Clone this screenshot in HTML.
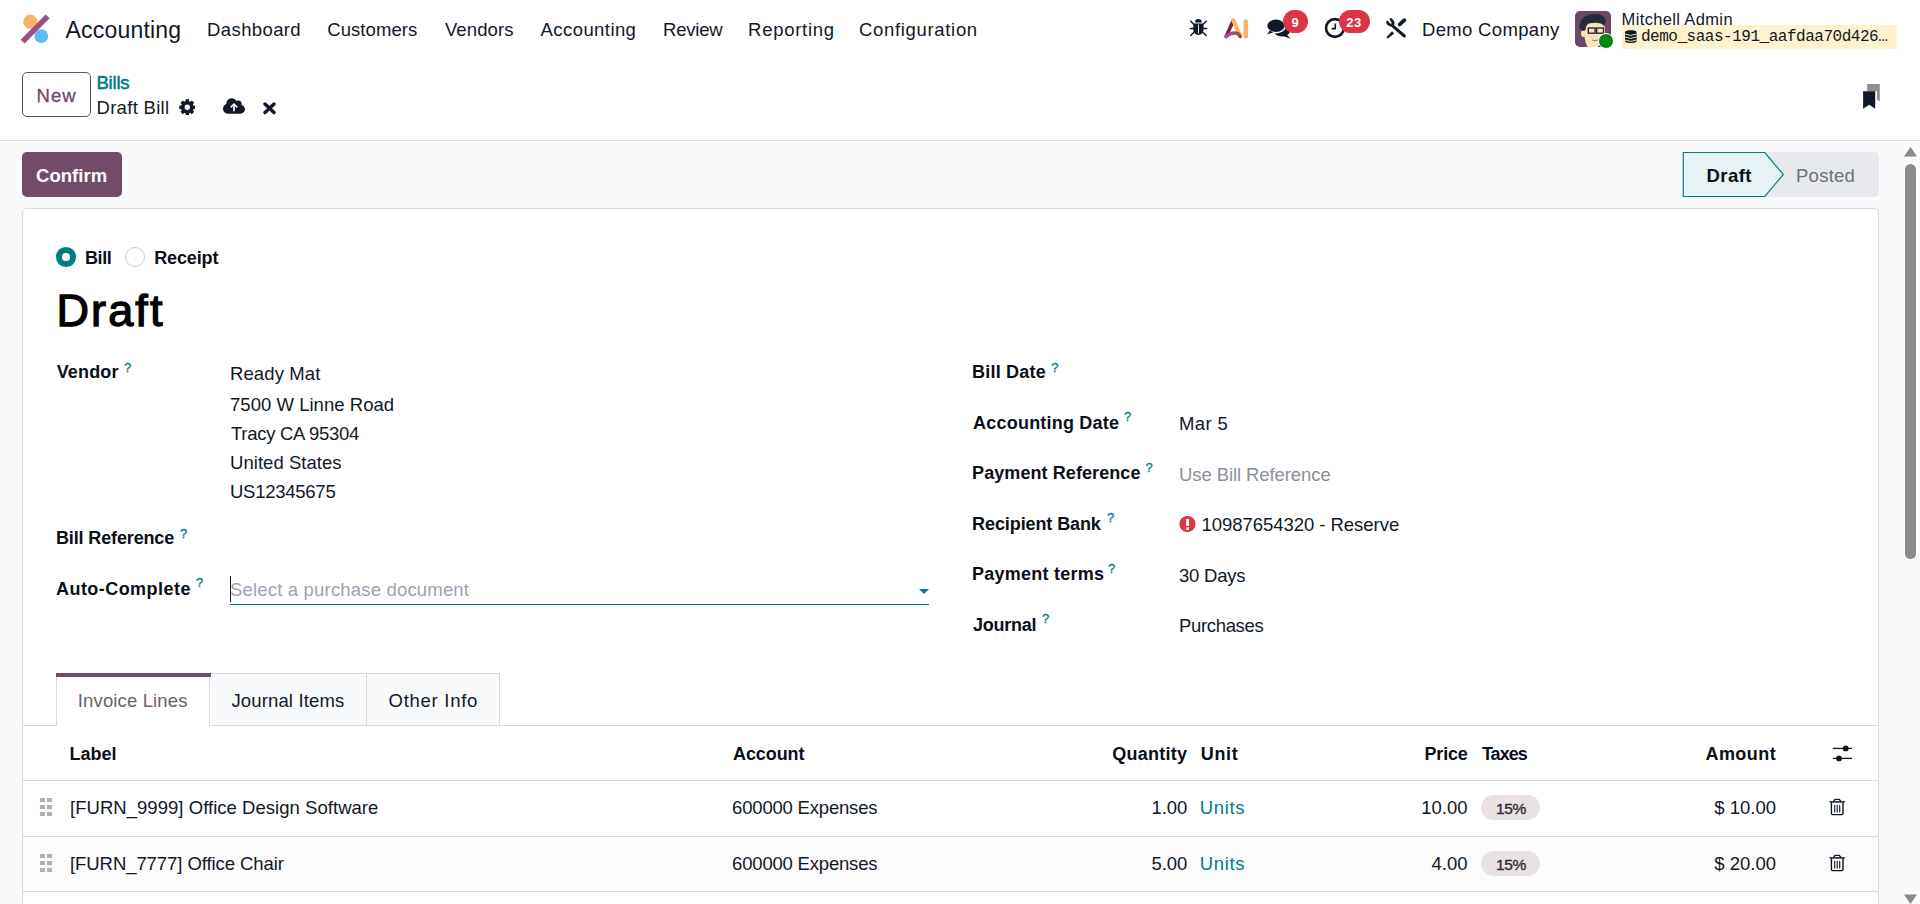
<!DOCTYPE html>
<html><head><meta charset="utf-8"><style>
html,body{margin:0;padding:0;width:1920px;height:904px;overflow:hidden;background:#fff;}
body{position:relative;font-family:"Liberation Sans",sans-serif;}
.t{position:absolute;white-space:nowrap;}
.a{position:absolute;}
</style></head><body>
<!-- content background -->
<div class="a" style="left:0;top:140px;width:1920px;height:1px;background:#d8dadd"></div>
<div class="a" style="left:0;top:141px;width:1920px;height:763px;background:#f9fafb"></div>
<!-- logo -->
<svg class="a" style="left:15px;top:10px" width="40" height="40" viewBox="15 10 40 40">
  <circle cx="30.3" cy="21.7" r="7.1" fill="#fbb36c"/>
  <circle cx="41.3" cy="36.1" r="6.9" fill="#5ebcf9"/>
  <line x1="22.6" y1="41.6" x2="47.6" y2="16.4" stroke="#985184" stroke-width="5.6" stroke-linecap="butt" stroke-linejoin="round"/>
</svg>
<!-- bug icon -->
<svg class="a" style="left:1188px;top:17px" width="21" height="21" viewBox="0 0 21 21" fill="#111827">
  <path d="M7 5.5 A3.4 3.4 0 0 1 13.8 5.5 Z"/>
  <path d="M5.3 6.6 H15.5 V13 A5.1 5.1 0 0 1 5.3 13 Z"/>
  <rect x="10.1" y="7.5" width="0.9" height="9" fill="#fff"/>
  <g stroke="#111827" stroke-width="1.5" stroke-linecap="round">
    <line x1="2.2" y1="11.6" x2="5.4" y2="11.6"/><line x1="15.4" y1="11.6" x2="18.7" y2="11.6"/>
    <line x1="2.7" y1="4.2" x2="5.8" y2="7.3"/><line x1="18.2" y1="4.2" x2="15.1" y2="7.3"/>
    <line x1="2.7" y1="18.5" x2="5.8" y2="15.5"/><line x1="18.2" y1="18.5" x2="15.1" y2="15.5"/>
  </g>
</svg>
<!-- AI icon -->
<svg class="a" style="left:1223px;top:17px" width="28" height="23" viewBox="0 0 28 23">
  <path d="M3.2 19.6 L10.3 3.6" stroke="#7a2540" stroke-width="3.6" stroke-linecap="round"/>
  <path d="M10.5 3.5 L17 19" stroke="#fbb36c" stroke-width="4.2" stroke-linecap="round"/>
  <path d="M3 19.5 Q9 14.5 14.5 16.5" stroke="#9b5087" stroke-width="3.4" fill="none" stroke-linecap="round"/>
  <path d="M14.2 16.4 Q16.2 17.2 17.2 19.6" stroke="#a24e2a" stroke-width="3.4" fill="none" stroke-linecap="round"/>
  <line x1="22.8" y1="4.5" x2="22.8" y2="19.3" stroke="#fbb36c" stroke-width="4.6" stroke-linecap="round"/>
</svg>
<!-- chat icon -->
<svg class="a" style="left:1265px;top:17px" width="28" height="23" viewBox="0 0 28 23" fill="#111827">
  <ellipse cx="16.8" cy="13.6" rx="8.3" ry="5.9"/>
  <path d="M21 17 L25.6 21.8 L18 19 Z"/>
  <ellipse cx="11" cy="8.8" rx="9.4" ry="6.9" stroke="#fff" stroke-width="1.4"/>
  <path d="M4.6 13.5 L2.2 17.6 L8.5 15.2 Z"/>
</svg>
<div class="a" style="left:1283px;top:10px;width:24.5px;height:23px;border-radius:12px;background:#dc3545"></div>
<!-- clock icon -->
<svg class="a" style="left:1323px;top:15px" width="26" height="26" viewBox="0 0 26 26">
  <circle cx="11.9" cy="13" r="8.9" fill="none" stroke="#111827" stroke-width="2.6"/>
  <path d="M12.3 8.5 V13.6 H8.6" fill="none" stroke="#111827" stroke-width="1.6"/>
</svg>
<div class="a" style="left:1338.5px;top:10px;width:31px;height:23px;border-radius:12px;background:#dc3545"></div>
<!-- tools icon -->
<svg class="a" style="left:1383px;top:15px" width="28" height="26" viewBox="0 0 28 26">
  <path d="M9.6 10.9 L21.4 21" stroke="#111827" stroke-width="3" stroke-linecap="round"/>
  <path d="M4.4 7.2 Q6.4 11.2 9.8 9.8 Q11 7 8 4.4" stroke="#111827" stroke-width="2.7" fill="none" stroke-linecap="round"/>
  <path d="M16.7 9.4 L21.4 5.2" stroke="#111827" stroke-width="3.8" stroke-linecap="round"/>
  <path d="M9 16.2 L11.2 18.6 L5.6 22.9 L3.6 23.4 L4.2 21.5 Z" fill="#111827"/>
</svg>
<!-- avatar -->
<svg class="a" style="left:1575px;top:11px" width="36" height="36" viewBox="0 0 36 36">
  <defs><clipPath id="av"><rect x="0" y="0" width="36" height="36" rx="5"/></clipPath></defs>
  <g clip-path="url(#av)">
  <rect x="0" y="0" width="36" height="36" fill="#6c4766"/>
  <path d="M9 18 C9 12 13 9 20 9 C27 9 30 13 30 19 C30 27 27 33 21 37 L13 37 C10 32 9 25 9 18 Z" fill="#fbe3b9"/>
  <ellipse cx="8.6" cy="22.5" rx="2.6" ry="3.4" fill="#fbe3b9"/>
  <path d="M4.5 17 C4 9 9 4 17 3.2 C25 2.5 31 5 30.5 11 L29 15 C26 11 20 11.5 14 12.5 C12 13 11 15 10.5 19 L8 20 Z" fill="#272b38"/>
  <rect x="13.3" y="17" width="6.8" height="5.2" fill="none" stroke="#272b38" stroke-width="1.4"/>
  <rect x="21.7" y="17" width="6.8" height="5.2" fill="none" stroke="#272b38" stroke-width="1.4"/>
  <line x1="20" y1="18.5" x2="21.8" y2="18.5" stroke="#272b38" stroke-width="1.2"/>
  <path d="M17 29 Q20 30.5 23 29" stroke="#a0665a" stroke-width="0.9" fill="none"/>
  </g>
</svg>
<div class="a" style="left:1597.5px;top:32.5px;width:14px;height:14px;border-radius:50%;background:#00890f;border:1.2px solid #fff;"></div>
<!-- db pill -->
<div class="a" style="left:1622px;top:25px;width:275px;height:24px;background:#fff2cc"></div>
<svg class="a" style="left:1624px;top:29px" width="14" height="15" viewBox="0 0 14 15">
  <path d="M1 3 C1 0.6 12.6 0.6 12.6 3 V12 C12.6 14.6 1 14.6 1 12 Z" fill="#111827"/>
  <path d="M1 5 Q6.8 7.8 12.6 5 M1 8 Q6.8 10.8 12.6 8 M1 11 Q6.8 13.8 12.6 11" stroke="#fff2cc" stroke-width="0.9" fill="none"/>
</svg>
<!-- New button -->
<div class="a" style="left:22px;top:72px;width:67px;height:43px;border:1px solid #714b67;border-radius:5px;"></div>
<!-- gear -->
<svg class="a" style="left:178.6px;top:98.6px" width="16.6" height="16.6" viewBox="0 0 16.4 16.4" fill="#111827" fill-rule="evenodd"><path d="M14.12 6.37 L16.14 6.59 L16.14 9.81 L14.12 10.03 L13.93 10.57 L13.68 11.09 L14.95 12.68 L12.68 14.95 L11.09 13.68 L10.57 13.93 L10.03 14.12 L9.81 16.14 L6.59 16.14 L6.37 14.12 L5.83 13.93 L5.31 13.68 L3.72 14.95 L1.45 12.68 L2.72 11.09 L2.47 10.57 L2.28 10.03 L0.26 9.81 L0.26 6.59 L2.28 6.37 L2.47 5.83 L2.72 5.31 L1.45 3.72 L3.72 1.45 L5.31 2.72 L5.83 2.47 L6.37 2.28 L6.59 0.26 L9.81 0.26 L10.03 2.28 L10.57 2.47 L11.09 2.72 L12.68 1.45 L14.95 3.72 L13.68 5.31 L13.93 5.83 Z M10.90 8.20 A2.7 2.7 0 1 0 5.50 8.20 A2.7 2.7 0 1 0 10.90 8.20 Z"/></svg>
<!-- cloud upload -->
<svg class="a" style="left:223px;top:97px" width="22" height="18" viewBox="0 0 640 512" fill="#111827">
<path d="M144 480C64.5 480 0 415.5 0 336c0-62.8 40.2-116.2 96.2-135.9c-.1-2.7-.2-5.4-.2-8.1c0-88.4 71.6-160 160-160c59.3 0 111 32.2 138.7 80.2C409.9 102 428.3 96 448 96c53 0 96 43 96 96c0 12.2-2.3 23.8-6.4 34.6C596 238.4 640 290.1 640 352c0 70.7-57.3 128-128 128H144zm79-217c-9.4 9.4-9.4 24.6 0 33.9s24.6 9.4 33.9 0l39-39V392c0 13.3 10.7 24 24 24s24-10.7 24-24V257.9l39 39c9.4 9.4 24.6 9.4 33.9 0s9.4-24.6 0-33.9l-80-80c-9.4-9.4-24.6-9.4-33.9 0l-80 80z"/>
</svg>
<!-- x -->
<svg class="a" style="left:262px;top:101px" width="15" height="14" viewBox="0 0 15 14">
<path d="M3 3 L12 11.6 M12 3 L3 11.6" stroke="#111827" stroke-width="3.4" stroke-linecap="round"/>
</svg>
<!-- bookmark -->
<svg class="a" style="left:1862px;top:83px" width="20" height="27" viewBox="0 0 20 27">
  <path d="M5.2 1 H17.8 V18.5 L15 16.5 V8.2 H5.2 Z" fill="#8f8f8f"/>
  <path d="M1.1 8.2 H13.2 V25.8 L7.15 21.8 L1.1 25.8 Z" fill="#111827"/>
</svg>
<!-- Confirm button -->
<div class="a" style="left:22px;top:152px;width:100px;height:45px;border-radius:5px;background:#714b67"></div>
<!-- status bar -->
<div class="a" style="left:1683px;top:152px;width:196px;height:45px;border-radius:4px;background:#e7e9ed"></div>
<svg class="a" style="left:1682px;top:151px" width="104" height="47" viewBox="0 0 104 47">
  <path d="M1.3 1.5 H82.8 L101.3 23.5 L82.8 45.5 H1.3 Z" fill="#e6f2f3" stroke="#017e84" stroke-width="1.2"/>
</svg>
<!-- scrollbar -->
<svg class="a" style="left:1903px;top:146px" width="15" height="12" viewBox="0 0 15 12"><path d="M7.5 1 L14 10.5 H1 Z" fill="#8a8a8a"/></svg>
<div class="a" style="left:1905px;top:164px;width:11px;height:395px;border-radius:5.5px;background:#8a8a8a"></div>
<svg class="a" style="left:1903px;top:893px" width="15" height="12" viewBox="0 0 15 12"><path d="M1 1.5 H14 L7.5 11 Z" fill="#8a8a8a"/></svg>
<!-- sheet -->
<div class="a" style="left:22px;top:208px;width:1855px;height:720px;border:1px solid #d8dadd;border-radius:5px;background:#fff"></div>
<!-- radios -->
<div class="a" style="left:56px;top:247px;width:7.5px;height:7.5px;border:6px solid #017e84;border-radius:50%;background:#fff"></div>
<div class="a" style="left:125px;top:247px;width:18px;height:18px;border:1px solid #c9ccd2;border-radius:50%;background:#fff"></div>
<!-- autocomplete -->
<div class="a" style="left:230px;top:603.5px;width:699px;height:1.5px;background:#017e84"></div>
<div class="a" style="left:230px;top:576px;width:1px;height:26px;background:#111827"></div>
<svg class="a" style="left:918px;top:588px" width="12" height="7" viewBox="0 0 12 7"><path d="M1 1 H11 L6 6 Z" fill="#017e84"/></svg>
<!-- bank warning -->
<svg class="a" style="left:1179px;top:516px" width="17" height="17" viewBox="0 0 17 17">
  <circle cx="8.45" cy="8.05" r="8.1" fill="#dc3545"/>
  <rect x="7.2" y="2.9" width="2.8" height="7" fill="#fff"/>
  <rect x="7.2" y="11.3" width="2.8" height="2.7" fill="#fff"/>
</svg>
<!-- tabs -->
<div class="a" style="left:23px;top:725px;width:1855px;height:1px;background:#d8dadd"></div>
<div class="a" style="box-sizing:border-box;left:211px;top:673px;width:156px;height:52px;border-top:1px solid #d8dadd;border-right:1px solid #d8dadd;background:#f9fafb"></div>
<div class="a" style="box-sizing:border-box;left:367px;top:673px;width:133px;height:52px;border-top:1px solid #d8dadd;border-right:1px solid #d8dadd;background:#f9fafb"></div>
<div class="a" style="box-sizing:border-box;left:56px;top:673px;width:154px;height:53px;border-left:1px solid #d8dadd;border-right:1px solid #d8dadd;background:#fff"></div>
<div class="a" style="left:56px;top:673px;width:155px;height:4px;background:#714b67"></div>
<!-- table lines -->
<div class="a" style="left:23px;top:780px;width:1855px;height:1px;background:#d8dadd"></div>
<div class="a" style="left:23px;top:837px;width:1855px;height:54px;background:#fbfbfb"></div>
<div class="a" style="left:23px;top:836px;width:1855px;height:1px;background:#d8dadd"></div>
<div class="a" style="left:23px;top:891px;width:1855px;height:1px;background:#d8dadd"></div>
<!-- drag handles -->
<svg class="a" style="left:39px;top:798px" width="14" height="19" viewBox="0 0 14 19" fill="#a9b1bb"><rect x="1" y="0" width="5" height="4"/><rect x="7.9" y="0" width="5" height="4"/><rect x="1" y="7" width="5" height="4"/><rect x="7.9" y="7" width="5" height="4"/><rect x="1" y="14" width="5" height="4"/><rect x="7.9" y="14" width="5" height="4"/></svg>
<svg class="a" style="left:39px;top:854px" width="14" height="19" viewBox="0 0 14 19" fill="#a9b1bb"><rect x="1" y="0" width="5" height="4"/><rect x="7.9" y="0" width="5" height="4"/><rect x="1" y="7" width="5" height="4"/><rect x="7.9" y="7" width="5" height="4"/><rect x="1" y="14" width="5" height="4"/><rect x="7.9" y="14" width="5" height="4"/></svg>
<!-- tax badges -->
<div class="a" style="left:1481px;top:795px;width:59px;height:25px;border-radius:12.5px;background:#e9e1e2"></div>
<div class="a" style="left:1481px;top:851px;width:59px;height:25px;border-radius:12.5px;background:#e9e1e2"></div>
<!-- sliders icon -->
<svg class="a" style="left:1832px;top:745px" width="21" height="18" viewBox="0 0 21 18">
  <line x1="0.8" y1="3.4" x2="20" y2="3.4" stroke="#111827" stroke-width="1.3"/>
  <line x1="0.8" y1="13.4" x2="20" y2="13.4" stroke="#111827" stroke-width="1.3"/>
  <circle cx="13.7" cy="3.4" r="2.9" fill="#111827"/>
  <circle cx="7" cy="13.4" r="2.9" fill="#111827"/>
</svg>
<!-- trash icons -->
<svg class="a" style="left:1829px;top:798px" width="17" height="19" viewBox="0 0 17 19">
  <path d="M4.6 3.4 L6.1 1.4 H10.3 L11.8 3.4" fill="none" stroke="#111827" stroke-width="1.4"/>
  <line x1="0.6" y1="3.9" x2="15.8" y2="3.9" stroke="#111827" stroke-width="1.5"/>
  <path d="M2.4 4.6 V15.2 Q2.4 16.6 3.8 16.6 H12.6 Q14 16.6 14 15.2 V4.6" fill="none" stroke="#111827" stroke-width="1.4"/>
  <line x1="5.7" y1="6.9" x2="5.7" y2="14.6" stroke="#111827" stroke-width="1.1"/>
  <line x1="8.2" y1="6.9" x2="8.2" y2="14.6" stroke="#111827" stroke-width="1.1"/>
  <line x1="10.7" y1="6.9" x2="10.7" y2="14.6" stroke="#111827" stroke-width="1.1"/>
</svg>
<svg class="a" style="left:1829px;top:854px" width="17" height="19" viewBox="0 0 17 19">
  <path d="M4.6 3.4 L6.1 1.4 H10.3 L11.8 3.4" fill="none" stroke="#111827" stroke-width="1.4"/>
  <line x1="0.6" y1="3.9" x2="15.8" y2="3.9" stroke="#111827" stroke-width="1.5"/>
  <path d="M2.4 4.6 V15.2 Q2.4 16.6 3.8 16.6 H12.6 Q14 16.6 14 15.2 V4.6" fill="none" stroke="#111827" stroke-width="1.4"/>
  <line x1="5.7" y1="6.9" x2="5.7" y2="14.6" stroke="#111827" stroke-width="1.1"/>
  <line x1="8.2" y1="6.9" x2="8.2" y2="14.6" stroke="#111827" stroke-width="1.1"/>
  <line x1="10.7" y1="6.9" x2="10.7" y2="14.6" stroke="#111827" stroke-width="1.1"/>
</svg>

<div id="brand" class="t" style="top:16.28px;font-size:23px;line-height:28px;font-weight:400;color:#111827;letter-spacing:0.200px;font-family:'Liberation Sans', sans-serif;left:65.50px;">Accounting</div>
<div id="nav0" class="t" style="top:18.89px;font-size:18.5px;line-height:22px;font-weight:400;color:#111827;letter-spacing:0.382px;font-family:'Liberation Sans', sans-serif;left:207.10px;">Dashboard</div>
<div id="nav1" class="t" style="top:18.89px;font-size:18.5px;line-height:22px;font-weight:400;color:#111827;letter-spacing:0.090px;font-family:'Liberation Sans', sans-serif;left:327.20px;">Customers</div>
<div id="nav2" class="t" style="top:18.89px;font-size:18.5px;line-height:22px;font-weight:400;color:#111827;letter-spacing:0.120px;font-family:'Liberation Sans', sans-serif;left:444.90px;">Vendors</div>
<div id="nav3" class="t" style="top:18.89px;font-size:18.5px;line-height:22px;font-weight:400;color:#111827;letter-spacing:0.420px;font-family:'Liberation Sans', sans-serif;left:540.60px;">Accounting</div>
<div id="nav4" class="t" style="top:18.89px;font-size:18.5px;line-height:22px;font-weight:400;color:#111827;letter-spacing:-0.216px;font-family:'Liberation Sans', sans-serif;left:663.00px;">Review</div>
<div id="nav5" class="t" style="top:18.89px;font-size:18.5px;line-height:22px;font-weight:400;color:#111827;letter-spacing:0.720px;font-family:'Liberation Sans', sans-serif;left:748.10px;">Reporting</div>
<div id="nav6" class="t" style="top:18.89px;font-size:18.5px;line-height:22px;font-weight:400;color:#111827;letter-spacing:0.675px;font-family:'Liberation Sans', sans-serif;left:859.00px;">Configuration</div>
<div id="company" class="t" style="top:18.94px;font-size:18.5px;line-height:22px;font-weight:400;color:#111827;letter-spacing:0.327px;font-family:'Liberation Sans', sans-serif;left:1422.00px;">Demo Company</div>
<div id="user" class="t" style="top:8.53px;font-size:16.5px;line-height:20px;font-weight:400;color:#111827;letter-spacing:0.353px;font-family:'Liberation Sans', sans-serif;left:1621.60px;">Mitchell Admin</div>
<div id="db" class="t" style="top:28.26px;font-size:16px;line-height:19px;font-weight:400;color:#111827;letter-spacing:-0.478px;font-family:'Liberation Mono', monospace;left:1641.00px;">demo_saas-191_aafdaa70d426…</div>
<div id="b9" class="t" style="top:14.90px;font-size:13px;line-height:16px;font-weight:700;color:#fff;letter-spacing:0.000px;font-family:'Liberation Sans', sans-serif;left:1291.50px;">9</div>
<div id="b23" class="t" style="top:14.90px;font-size:13px;line-height:16px;font-weight:700;color:#fff;letter-spacing:0.360px;font-family:'Liberation Sans', sans-serif;left:1346.30px;">23</div>
<div id="new" class="t" style="top:84.89px;font-size:18.5px;line-height:22px;font-weight:400;color:#714b67;letter-spacing:0.990px;font-family:'Liberation Sans', sans-serif;-webkit-text-stroke:0.3px #714b67;left:36.60px;">New</div>
<div id="bills" class="t" style="top:71.84px;font-size:18.5px;line-height:22px;font-weight:400;color:#017e84;letter-spacing:-0.225px;font-family:'Liberation Sans', sans-serif;-webkit-text-stroke:0.55px #017e84;left:96.50px;">Bills</div>
<div id="draftbill" class="t" style="top:96.84px;font-size:18.5px;line-height:22px;font-weight:400;color:#111827;letter-spacing:0.300px;font-family:'Liberation Sans', sans-serif;left:96.50px;">Draft Bill</div>
<div id="confirm" class="t" style="top:165.09px;font-size:18.5px;line-height:22px;font-weight:700;color:#fff;letter-spacing:0.030px;font-family:'Liberation Sans', sans-serif;left:36.00px;">Confirm</div>
<div id="stdraft" class="t" style="top:165.09px;font-size:18.5px;line-height:22px;font-weight:700;color:#0b0f19;letter-spacing:0.450px;font-family:'Liberation Sans', sans-serif;left:1706.50px;">Draft</div>
<div id="stposted" class="t" style="top:165.09px;font-size:18.5px;line-height:22px;font-weight:400;color:#6b7280;letter-spacing:0.252px;font-family:'Liberation Sans', sans-serif;left:1796.00px;">Posted</div>
<div id="rbill" class="t" style="top:247.06px;font-size:18px;line-height:22px;font-weight:700;color:#0b0f19;letter-spacing:-0.420px;font-family:'Liberation Sans', sans-serif;left:85.00px;">Bill</div>
<div id="rreceipt" class="t" style="top:247.06px;font-size:18px;line-height:22px;font-weight:700;color:#0b0f19;letter-spacing:-0.120px;font-family:'Liberation Sans', sans-serif;left:154.20px;">Receipt</div>
<div id="bigdraft" class="t" style="top:284.11px;font-size:45px;line-height:54px;font-weight:400;color:#000;letter-spacing:2.115px;font-family:'Liberation Sans', sans-serif;-webkit-text-stroke:1.3px #000;left:56.50px;">Draft</div>
<div id="l_vendor" class="t" style="top:361.16px;font-size:18px;line-height:22px;font-weight:700;color:#0b0f19;letter-spacing:0.144px;font-family:'Liberation Sans', sans-serif;left:56.70px;">Vendor</div>
<div id="v1" class="t" style="top:362.84px;font-size:18.5px;line-height:22px;font-weight:400;color:#111827;letter-spacing:0.113px;font-family:'Liberation Sans', sans-serif;left:230.00px;">Ready Mat</div>
<div id="v2" class="t" style="top:394.09px;font-size:18.5px;line-height:22px;font-weight:400;color:#111827;letter-spacing:0.034px;font-family:'Liberation Sans', sans-serif;left:230.00px;">7500 W Linne Road</div>
<div id="v3" class="t" style="top:423.09px;font-size:18.5px;line-height:22px;font-weight:400;color:#111827;letter-spacing:-0.277px;font-family:'Liberation Sans', sans-serif;left:231.00px;">Tracy CA 95304</div>
<div id="v4" class="t" style="top:451.89px;font-size:18.5px;line-height:22px;font-weight:400;color:#111827;letter-spacing:0.045px;font-family:'Liberation Sans', sans-serif;left:230.00px;">United States</div>
<div id="v5" class="t" style="top:480.69px;font-size:18.5px;line-height:22px;font-weight:400;color:#111827;letter-spacing:-0.260px;font-family:'Liberation Sans', sans-serif;left:230.00px;">US12345675</div>
<div id="l_billref" class="t" style="top:526.96px;font-size:18px;line-height:22px;font-weight:700;color:#0b0f19;letter-spacing:-0.138px;font-family:'Liberation Sans', sans-serif;left:56.00px;">Bill Reference</div>
<div id="l_auto" class="t" style="top:577.96px;font-size:18px;line-height:22px;font-weight:700;color:#0b0f19;letter-spacing:0.450px;font-family:'Liberation Sans', sans-serif;left:56.00px;">Auto-Complete</div>
<div id="ph" class="t" style="top:578.89px;font-size:18.5px;line-height:22px;font-weight:400;color:#9ca3af;letter-spacing:0.180px;font-family:'Liberation Sans', sans-serif;left:230.00px;">Select a purchase document</div>
<div id="l_billdate" class="t" style="top:361.16px;font-size:18px;line-height:22px;font-weight:700;color:#0b0f19;letter-spacing:0.202px;font-family:'Liberation Sans', sans-serif;left:972.10px;">Bill Date</div>
<div id="l_accdate" class="t" style="top:412.16px;font-size:18px;line-height:22px;font-weight:700;color:#0b0f19;letter-spacing:0.206px;font-family:'Liberation Sans', sans-serif;left:973.10px;">Accounting Date</div>
<div id="l_payref" class="t" style="top:462.16px;font-size:18px;line-height:22px;font-weight:700;color:#0b0f19;letter-spacing:0.079px;font-family:'Liberation Sans', sans-serif;left:972.10px;">Payment Reference</div>
<div id="l_bank" class="t" style="top:513.16px;font-size:18px;line-height:22px;font-weight:700;color:#0b0f19;letter-spacing:-0.097px;font-family:'Liberation Sans', sans-serif;left:972.10px;">Recipient Bank</div>
<div id="l_terms" class="t" style="top:563.26px;font-size:18px;line-height:22px;font-weight:700;color:#0b0f19;letter-spacing:0.240px;font-family:'Liberation Sans', sans-serif;left:972.10px;">Payment terms</div>
<div id="l_journal" class="t" style="top:614.06px;font-size:18px;line-height:22px;font-weight:700;color:#0b0f19;letter-spacing:-0.270px;font-family:'Liberation Sans', sans-serif;left:973.10px;">Journal</div>
<div id="mar5" class="t" style="top:413.09px;font-size:18.5px;line-height:22px;font-weight:400;color:#111827;letter-spacing:0.405px;font-family:'Liberation Sans', sans-serif;left:1178.90px;">Mar 5</div>
<div id="useref" class="t" style="top:463.99px;font-size:18.5px;line-height:22px;font-weight:400;color:#8b9099;letter-spacing:-0.095px;font-family:'Liberation Sans', sans-serif;left:1179.10px;">Use Bill Reference</div>
<div id="bank" class="t" style="top:514.09px;font-size:18.5px;line-height:22px;font-weight:400;color:#111827;letter-spacing:-0.036px;font-family:'Liberation Sans', sans-serif;left:1201.40px;">10987654320 - Reserve</div>
<div id="days" class="t" style="top:565.09px;font-size:18.5px;line-height:22px;font-weight:400;color:#111827;letter-spacing:-0.210px;font-family:'Liberation Sans', sans-serif;left:1179.00px;">30 Days</div>
<div id="purch" class="t" style="top:615.39px;font-size:18.5px;line-height:22px;font-weight:400;color:#111827;letter-spacing:-0.338px;font-family:'Liberation Sans', sans-serif;left:1179.00px;">Purchases</div>
<div id="q0" class="t" style="top:359.70px;font-size:13px;line-height:16px;font-weight:400;color:#017e84;letter-spacing:0.000px;font-family:'Liberation Sans', sans-serif;-webkit-text-stroke:0.3px #017e84;left:124.00px;">?</div>
<div id="q1" class="t" style="top:525.70px;font-size:13px;line-height:16px;font-weight:400;color:#017e84;letter-spacing:0.000px;font-family:'Liberation Sans', sans-serif;-webkit-text-stroke:0.3px #017e84;left:180.10px;">?</div>
<div id="q2" class="t" style="top:575.20px;font-size:13px;line-height:16px;font-weight:400;color:#017e84;letter-spacing:0.000px;font-family:'Liberation Sans', sans-serif;-webkit-text-stroke:0.3px #017e84;left:196.00px;">?</div>
<div id="q3" class="t" style="top:359.60px;font-size:13px;line-height:16px;font-weight:400;color:#017e84;letter-spacing:0.000px;font-family:'Liberation Sans', sans-serif;-webkit-text-stroke:0.3px #017e84;left:1051.20px;">?</div>
<div id="q4" class="t" style="top:409.40px;font-size:13px;line-height:16px;font-weight:400;color:#017e84;letter-spacing:0.000px;font-family:'Liberation Sans', sans-serif;-webkit-text-stroke:0.3px #017e84;left:1124.10px;">?</div>
<div id="q5" class="t" style="top:460.10px;font-size:13px;line-height:16px;font-weight:400;color:#017e84;letter-spacing:0.000px;font-family:'Liberation Sans', sans-serif;-webkit-text-stroke:0.3px #017e84;left:1145.60px;">?</div>
<div id="q6" class="t" style="top:510.20px;font-size:13px;line-height:16px;font-weight:400;color:#017e84;letter-spacing:0.000px;font-family:'Liberation Sans', sans-serif;-webkit-text-stroke:0.3px #017e84;left:1107.10px;">?</div>
<div id="q7" class="t" style="top:561.20px;font-size:13px;line-height:16px;font-weight:400;color:#017e84;letter-spacing:0.000px;font-family:'Liberation Sans', sans-serif;-webkit-text-stroke:0.3px #017e84;left:1108.00px;">?</div>
<div id="q8" class="t" style="top:611.20px;font-size:13px;line-height:16px;font-weight:400;color:#017e84;letter-spacing:0.000px;font-family:'Liberation Sans', sans-serif;-webkit-text-stroke:0.3px #017e84;left:1041.90px;">?</div>
<div id="tab1" class="t" style="top:689.89px;font-size:18.5px;line-height:22px;font-weight:400;color:#6f5f6c;letter-spacing:0.135px;font-family:'Liberation Sans', sans-serif;left:77.80px;">Invoice Lines</div>
<div id="tab2" class="t" style="top:689.89px;font-size:18.5px;line-height:22px;font-weight:400;color:#111827;letter-spacing:0.150px;font-family:'Liberation Sans', sans-serif;left:231.40px;">Journal Items</div>
<div id="tab3" class="t" style="top:689.89px;font-size:18.5px;line-height:22px;font-weight:400;color:#111827;letter-spacing:0.720px;font-family:'Liberation Sans', sans-serif;left:388.60px;">Other Info</div>
<div id="h_label" class="t" style="top:743.26px;font-size:18px;line-height:22px;font-weight:700;color:#0b0f19;letter-spacing:0.000px;font-family:'Liberation Sans', sans-serif;left:69.60px;">Label</div>
<div id="h_acc" class="t" style="top:743.26px;font-size:18px;line-height:22px;font-weight:700;color:#0b0f19;letter-spacing:-0.120px;font-family:'Liberation Sans', sans-serif;left:733.10px;">Account</div>
<div id="h_qty" class="t" style="top:743.26px;font-size:18px;line-height:22px;font-weight:700;color:#0b0f19;letter-spacing:0.283px;font-family:'Liberation Sans', sans-serif;right:732.60px;">Quantity</div>
<div id="h_unit" class="t" style="top:743.26px;font-size:18px;line-height:22px;font-weight:700;color:#0b0f19;letter-spacing:0.660px;font-family:'Liberation Sans', sans-serif;left:1200.80px;">Unit</div>
<div id="h_price" class="t" style="top:743.26px;font-size:18px;line-height:22px;font-weight:700;color:#0b0f19;letter-spacing:-0.225px;font-family:'Liberation Sans', sans-serif;right:452.50px;">Price</div>
<div id="h_taxes" class="t" style="top:743.26px;font-size:18px;line-height:22px;font-weight:700;color:#0b0f19;letter-spacing:-0.945px;font-family:'Liberation Sans', sans-serif;left:1481.90px;">Taxes</div>
<div id="h_amount" class="t" style="top:743.26px;font-size:18px;line-height:22px;font-weight:700;color:#0b0f19;letter-spacing:0.432px;font-family:'Liberation Sans', sans-serif;right:143.95px;">Amount</div>
<div id="r0_lab" class="t" style="top:797.09px;font-size:18.5px;line-height:22px;font-weight:400;color:#111827;letter-spacing:0.038px;font-family:'Liberation Sans', sans-serif;left:70.00px;">[FURN_9999] Office Design Software</div>
<div id="r0_acc" class="t" style="top:797.09px;font-size:18.5px;line-height:22px;font-weight:400;color:#111827;letter-spacing:-0.193px;font-family:'Liberation Sans', sans-serif;left:732.10px;">600000 Expenses</div>
<div id="r0_qty" class="t" style="top:797.09px;font-size:18.5px;line-height:22px;font-weight:400;color:#111827;letter-spacing:0.000px;font-family:'Liberation Sans', sans-serif;right:732.60px;">1.00</div>
<div id="r0_unit" class="t" style="top:797.09px;font-size:18.5px;line-height:22px;font-weight:400;color:#017e84;letter-spacing:0.630px;font-family:'Liberation Sans', sans-serif;left:1199.80px;">Units</div>
<div id="r0_price" class="t" style="top:797.09px;font-size:18.5px;line-height:22px;font-weight:400;color:#111827;letter-spacing:0.000px;font-family:'Liberation Sans', sans-serif;right:452.50px;">10.00</div>
<div id="r0_tax" class="t" style="top:798.83px;font-size:15.5px;line-height:19px;font-weight:400;color:#2f2a33;letter-spacing:-0.360px;font-family:'Liberation Sans', sans-serif;-webkit-text-stroke:0.35px #2f2a33;left:1496.00px;">15%</div>
<div id="r0_amt" class="t" style="top:797.09px;font-size:18.5px;line-height:22px;font-weight:400;color:#111827;letter-spacing:0.000px;font-family:'Liberation Sans', sans-serif;right:143.95px;">$ 10.00</div>
<div id="r1_lab" class="t" style="top:852.89px;font-size:18.5px;line-height:22px;font-weight:400;color:#111827;letter-spacing:-0.070px;font-family:'Liberation Sans', sans-serif;left:70.00px;">[FURN_7777] Office Chair</div>
<div id="r1_acc" class="t" style="top:852.89px;font-size:18.5px;line-height:22px;font-weight:400;color:#111827;letter-spacing:-0.193px;font-family:'Liberation Sans', sans-serif;left:732.10px;">600000 Expenses</div>
<div id="r1_qty" class="t" style="top:852.89px;font-size:18.5px;line-height:22px;font-weight:400;color:#111827;letter-spacing:0.000px;font-family:'Liberation Sans', sans-serif;right:732.60px;">5.00</div>
<div id="r1_unit" class="t" style="top:852.89px;font-size:18.5px;line-height:22px;font-weight:400;color:#017e84;letter-spacing:0.630px;font-family:'Liberation Sans', sans-serif;left:1199.80px;">Units</div>
<div id="r1_price" class="t" style="top:852.89px;font-size:18.5px;line-height:22px;font-weight:400;color:#111827;letter-spacing:0.000px;font-family:'Liberation Sans', sans-serif;right:452.50px;">4.00</div>
<div id="r1_tax" class="t" style="top:854.63px;font-size:15.5px;line-height:19px;font-weight:400;color:#2f2a33;letter-spacing:-0.360px;font-family:'Liberation Sans', sans-serif;-webkit-text-stroke:0.35px #2f2a33;left:1496.00px;">15%</div>
<div id="r1_amt" class="t" style="top:852.89px;font-size:18.5px;line-height:22px;font-weight:400;color:#111827;letter-spacing:0.000px;font-family:'Liberation Sans', sans-serif;right:143.95px;">$ 20.00</div>
</body></html>
